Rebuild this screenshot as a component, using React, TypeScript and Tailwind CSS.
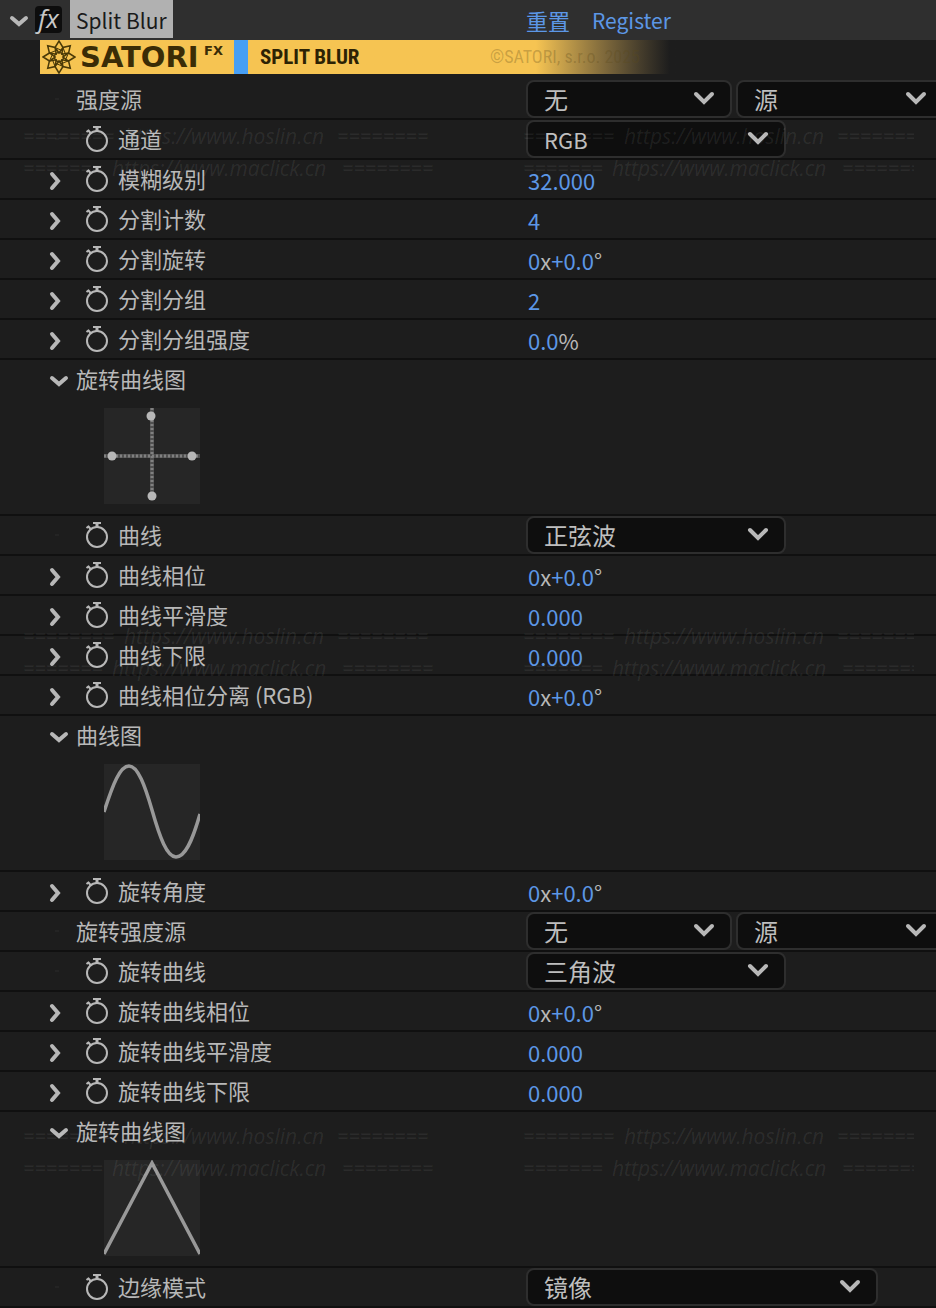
import React, { useState } from "react";

interface Dropdown {
  options: string[];
  width: string;
  textSize?: string;
}

interface Property {
  id: string;
  label: string;
  keyable?: boolean;
  twirl?: boolean;
  value?: string;
  dropdowns?: Dropdown[];
}

const layerOptions: Dropdown[] = [
  { options: ["无"], width: "w-[206px]" },
  { options: ["源", "蒙版", "效果和蒙版"], width: "w-[208px]" },
];

const waveOptions = ["正弦波", "三角波", "方波", "锯齿波"];

const blurProps: Property[] = [
  { id: "strength-source", label: "强度源", dropdowns: layerOptions },
  {
    id: "channel",
    label: "通道",
    keyable: true,
    dropdowns: [{ options: ["RGB"], width: "w-[260px]", textSize: "text-[22px]" }],
  },
  { id: "blur-level", label: "模糊级别", keyable: true, twirl: true, value: "32.000" },
  { id: "split-count", label: "分割计数", keyable: true, twirl: true, value: "4" },
  { id: "split-rotation", label: "分割旋转", keyable: true, twirl: true, value: "0x+0.0°" },
  { id: "split-group", label: "分割分组", keyable: true, twirl: true, value: "2" },
  { id: "split-group-strength", label: "分割分组强度", keyable: true, twirl: true, value: "0.0%" },
];

const curveProps: Property[] = [
  {
    id: "curve",
    label: "曲线",
    keyable: true,
    dropdowns: [{ options: waveOptions, width: "w-[260px]" }],
  },
  { id: "curve-phase", label: "曲线相位", keyable: true, twirl: true, value: "0x+0.0°" },
  { id: "curve-smooth", label: "曲线平滑度", keyable: true, twirl: true, value: "0.000" },
  { id: "curve-floor", label: "曲线下限", keyable: true, twirl: true, value: "0.000" },
  { id: "curve-split", label: "曲线相位分离 (RGB)", keyable: true, twirl: true, value: "0x+0.0°" },
];

const rotationProps: Property[] = [
  { id: "rotation-angle", label: "旋转角度", keyable: true, twirl: true, value: "0x+0.0°" },
  { id: "rotation-source", label: "旋转强度源", dropdowns: layerOptions },
  {
    id: "rotation-curve",
    label: "旋转曲线",
    keyable: true,
    dropdowns: [{ options: ["三角波", "正弦波", "方波", "锯齿波"], width: "w-[260px]" }],
  },
  { id: "rotation-phase", label: "旋转曲线相位", keyable: true, twirl: true, value: "0x+0.0°" },
  { id: "rotation-smooth", label: "旋转曲线平滑度", keyable: true, twirl: true, value: "0.000" },
  { id: "rotation-floor", label: "旋转曲线下限", keyable: true, twirl: true, value: "0.000" },
];

const edgeProps: Property[] = [
  {
    id: "edge-mode",
    label: "边缘模式",
    keyable: true,
    dropdowns: [{ options: ["镜像", "重复", "无"], width: "w-[352px]" }],
  },
];

const TwirlIcon = ({ open }: { open: boolean }) => (
  <svg
    width="20"
    height="20"
    viewBox="0 0 20 20"
    fill="none"
    stroke="currentColor"
    strokeWidth="4"
    strokeLinecap="round"
  >
    {open ? <path d="M3 7 L10 13 L17 7" /> : <path d="M3 3 L9 10 L3 17" />}
  </svg>
);

const StopwatchIcon = () => (
  <svg width="24" height="28" viewBox="0 0 24 28" fill="none" stroke="currentColor">
    <circle cx="12" cy="16" r="10" strokeWidth="2" />
    <path d="M8 2 H16" strokeWidth="2" />
    <path d="M12 2 V6" strokeWidth="3" />
    <path d="M1.5 7 L4 5 M3 5 L6 8.5" strokeWidth="2" />
  </svg>
);

const Select = ({ id, label, dropdown }: { id: string; label: string; dropdown: Dropdown }) => (
  <div className={`relative shrink-0 ${dropdown.width}`}>
    <select
      id={id}
      aria-label={label}
      className={`block h-[38px] w-full appearance-none rounded-lg border-2 border-[#2e2e2e] bg-[#0e0e0e] pl-4 pr-12 leading-8 text-[#bebebe] outline-none ${
        dropdown.textSize ?? "text-2xl"
      }`}
    >
      {dropdown.options.map((option) => (
        <option key={option}>{option}</option>
      ))}
    </select>
    <svg
      className="pointer-events-none absolute right-[17px] top-2.5 text-[#b8b8b8]"
      width="22"
      height="16"
      viewBox="0 0 22 16"
      fill="none"
      stroke="currentColor"
      strokeWidth="4"
      strokeLinecap="round"
    >
      <path d="M3 4 L11 12 L19 4" />
    </svg>
  </div>
);

// the "x", "°" and "%" units are grey, the numbers are blue
const Value = ({ id, value }: { id: string; value: string }) => (
  <button id={id} className="ml-0.5 pt-0.5 text-[22px] leading-8 text-[#5c97e6]">
    {value.split(/([x°%])/).map((part, i) => (
      <span key={i} className={/[x°%]/.test(part) ? "text-[#b8b8b8]" : ""}>
        {part}
      </span>
    ))}
  </button>
);

const PropertyRow = ({ property }: { property: Property }) => (
  <div className="flex h-10 items-center overflow-hidden border-b-2 border-[#101010]">
    <div className="flex w-[526px] shrink-0 items-center pl-[49px]">
      <div className="w-[27px]">
        {property.twirl ? (
          <button aria-label={`展开${property.label}`} className="block pt-1">
            <TwirlIcon open={false} />
          </button>
        ) : (
          <div className="ml-1.5 h-0.5 w-1 bg-[#242424]" />
        )}
      </div>
      {property.keyable && (
        <button aria-label={`${property.label}关键帧`} className="ml-[9px] mr-[9px] block">
          <StopwatchIcon />
        </button>
      )}
      <label htmlFor={property.id} className="pb-0.5 text-[22px] leading-8">
        {property.label}
      </label>
    </div>
    <div className="flex min-w-0 flex-1 items-center gap-1">
      {property.dropdowns?.map((dropdown, i) => (
        <Select
          key={i}
          id={i === 0 ? property.id : `${property.id}-${i}`}
          label={property.label}
          dropdown={dropdown}
        />
      ))}
      {property.value && <Value id={property.id} value={property.value} />}
    </div>
  </div>
);

const GraphGroup = ({ title, children }: { title: string; children: React.ReactNode }) => {
  const [isOpen, setIsOpen] = useState(true);
  return (
    <section className="border-b-2 border-[#101010]">
      <button
        className="flex h-[38px] items-center pl-[49px] text-[22px] leading-8"
        aria-expanded={isOpen}
        onClick={() => setIsOpen(!isOpen)}
      >
        <span className="block w-[27px] pt-1">
          <TwirlIcon open={isOpen} />
        </span>
        <span className="pb-0.5">{title}</span>
      </button>
      {isOpen && (
        <div className="pb-2.5 pl-[104px] pt-2.5">
          <svg className="bg-[#262626]" width="96" height="96" viewBox="0 0 96 96" fill="none">
            {children}
          </svg>
        </div>
      )}
    </section>
  );
};

const SatoriMark = () => (
  <svg width="34" height="34" viewBox="-17 -17 34 34" fill="none" stroke="#4a3a08" strokeWidth="1.5">
    {[0, 45, 90, 135, 180, 225, 270, 315].map((angle) => (
      <g key={angle} transform={`rotate(${angle})`}>
        <path d="M0 -16 L4 -9.5 L0 -4 L-4 -9.5 Z" />
        <path d="M-4 -9.5 L4 -6" strokeWidth="1" />
      </g>
    ))}
    <circle r="4.5" />
  </svg>
);

const Banner = () => (
  <div className="h-10 pl-10">
    <div className="flex h-[34px] w-[636px] items-center overflow-hidden bg-linear-to-r from-[#f6c452] from-78% to-[#1d1d1d] to-99% text-[#3a2c06]">
      <div className="flex w-[194px] shrink-0 items-center pl-0.5">
        <SatoriMark />
        <span className="w-[128px] pl-1 font-['DejaVu_Sans',sans-serif] text-[29px] font-bold leading-8">
          SATORI
        </span>
        <span className="mb-3 font-['DejaVu_Sans',sans-serif] text-[13px] font-bold leading-4">FX</span>
      </div>
      <div className="h-full w-3.5 shrink-0 bg-[#479ff5]" />
      <span className="w-[242px] shrink-0 pl-3 font-['Roboto_Condensed','Roboto',sans-serif] text-[21px] font-bold leading-8 text-[#2c2204]">
        SPLIT BLUR
      </span>
      <span className="whitespace-nowrap font-['Roboto_Condensed','Roboto',sans-serif] text-lg leading-8 text-[#5c4a1a]/30">
        ©SATORI, s.r.o. 2025
      </span>
    </div>
  </div>
);

const WatermarkBlock = () => (
  <div className="w-[500px] shrink-0 pl-[23px]">
    <div className="flex h-8 items-center">
      <span className="w-[101px] text-xl font-semibold text-white/6">========</span>
      <span className="w-[213px]">https://www.hoslin.cn</span>
      <span className="text-xl font-semibold text-white/6">========</span>
    </div>
    <div className="flex h-8 items-center">
      <span className="w-[89px] text-xl font-semibold text-white/6">=======</span>
      <span className="w-[230px]">https://www.maclick.cn</span>
      <span className="text-xl font-semibold text-white/6">========</span>
    </div>
  </div>
);

const Watermark = () => (
  <div
    aria-hidden="true"
    className="pointer-events-none absolute inset-0 flex flex-col gap-[436px] overflow-hidden pr-[22px] pt-[120px] font-['Open_Sans',sans-serif] text-[21px] font-medium italic leading-8 text-white/8"
  >
    {[0, 1, 2].map((row) => (
      <div key={row} className="flex overflow-hidden">
        <WatermarkBlock />
        <WatermarkBlock />
      </div>
    ))}
  </div>
);

const EffectHeader = () => (
  <header className="flex h-10 items-start bg-[#2f2f2f]">
    <div className="flex w-[526px] shrink-0 items-start">
      <button aria-label="折叠效果" className="ml-[9px] block pt-[11px] text-[#b8b8b8]">
        <TwirlIcon open />
      </button>
      <button
        aria-label="启用效果"
        className="ml-1.5 mt-1.5 flex h-[27px] w-[27px] items-center justify-center rounded bg-[#0d0d0d] pb-1 font-['Open_Sans',sans-serif] text-[26px] italic leading-6 text-[#c8c8c8]"
      >
        fx
      </button>
      <h1 className="ml-2 h-[38px] bg-[#b1b1b1] px-1.5 pt-1 text-[21px] leading-8 text-[#1a1a1a]">
        Split Blur
      </h1>
    </div>
    <div className="flex gap-[22px] pt-1 text-[21px] leading-8 text-[#5c97e6]">
      <button className="text-[22px]">重置</button>
      <button>Register</button>
    </div>
  </header>
);

const App: React.FC = () => {
  return (
    <div className="relative min-h-screen overflow-hidden bg-[#1d1d1d] font-['Noto_Sans_CJK_SC',sans-serif] text-[#b8b8b8]">
      <EffectHeader />
      <Banner />
      {blurProps.map((property) => (
        <PropertyRow key={property.id} property={property} />
      ))}
      <GraphGroup title="旋转曲线图">
        <path d="M48 0 V92 M0 48 H96" stroke="#505050" strokeWidth="4" />
        <path d="M48 0 V92 M0 48 H96" stroke="#808080" strokeWidth="3" strokeDasharray="2 2" />
        <circle cx="47" cy="8" r="4.5" fill="#b8b8b8" />
        <circle cx="8" cy="48" r="4.5" fill="#b8b8b8" />
        <circle cx="88" cy="48" r="4.5" fill="#b8b8b8" />
        <circle cx="48" cy="88" r="4.5" fill="#b8b8b8" />
      </GraphGroup>
      {curveProps.map((property) => (
        <PropertyRow key={property.id} property={property} />
      ))}
      <GraphGroup title="曲线图">
        <path
          d="M0 48 C9 20 16 2 25 2 C34 2 41 22 48 46 C56 74 63 93 72 93 C81 93 88 78 96 50"
          stroke="#999999"
          strokeWidth="3.5"
        />
      </GraphGroup>
      {rotationProps.map((property) => (
        <PropertyRow key={property.id} property={property} />
      ))}
      <GraphGroup title="旋转曲线图">
        <path d="M0 94 L48 3 L96 94" stroke="#999999" strokeWidth="3.5" />
      </GraphGroup>
      {edgeProps.map((property) => (
        <PropertyRow key={property.id} property={property} />
      ))}
      <Watermark />
    </div>
  );
};

export default App;
